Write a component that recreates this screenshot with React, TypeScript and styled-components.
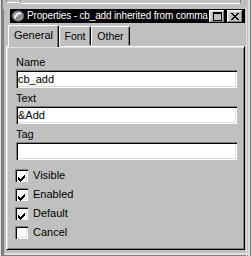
import React from 'react';
import styled, { createGlobalStyle } from 'styled-components';

const GlobalStyle = createGlobalStyle`
  html, body {
    margin: 0;
    padding: 0;
    background: #c0c0c0;
  }
  * {
    box-sizing: border-box;
  }
`;

const Screen = styled.div`
  width: 251px;
  height: 256px;
  overflow: hidden;
  background: #c0c0c0;
  font-family: 'Liberation Sans', Arial, sans-serif;
  font-size: 10.5px;
  color: #000;
  display: flex;
  flex-direction: column;
  box-shadow: inset 1px 0 #dfdfdf, inset 3px 0 #808080, inset -1px 0 #808080,
    inset -3px 0 #dfdfdf, inset 0 -1px #808080, inset 0 -3px #dfdfdf;
`;

const TopStrip = styled.div`
  height: 9px;
  display: flex;
  padding: 0 10px 0 6px;
`;

const Ledge = styled.div<{ boxed?: boolean }>`
  height: ${(p) => (p.boxed ? '3px' : '4px')};
  width: ${(p) => (p.boxed ? '15px' : 'auto')};
  flex: ${(p) => (p.boxed ? '0 0 auto' : '1')};
  border-bottom: 1px solid #fff;
  border-left: ${(p) => (p.boxed ? '1px solid #808080' : 'none')};
  border-right: 1px solid #808080;
`;

const Dialog = styled.div`
  flex: 1;
  display: flex;
  flex-direction: column;
  margin: 0 4px 0 3px;
  padding: 0 1px 0 2px;
  border-left: 1px solid #808080;
  border-right: 1px solid #dfdfdf;
`;

const TitleBar = styled.div`
  height: 14px;
  margin: 0 0 0 4px;
  background: #000;
  display: flex;
  align-items: center;
  padding: 0 2px 0 1px;
`;

const TitleText = styled.div`
  flex: 1;
  min-width: 0;
  overflow: hidden;
  white-space: nowrap;
  color: #fff;
  font-size: 10px;
  letter-spacing: -0.15px;
  line-height: 14px;
  margin-left: 2px;
`;

const CaptionButton = styled.div<{ gap?: number }>`
  width: 16px;
  height: 13px;
  flex: 0 0 auto;
  margin-left: ${(p) => p.gap ?? 0}px;
  background: #c0c0c0;
  display: flex;
  align-items: center;
  justify-content: center;
  box-shadow: inset -1px -1px #000, inset 1px 1px #fff, inset -2px -2px #808080,
    inset 2px 2px #dfdfdf;
`;

const TabRow = styled.div`
  height: 22px;
  margin-top: 1px;
  display: flex;
  align-items: flex-end;
  padding-left: 2px;
  position: relative;
  z-index: 1;
`;

const Tab = styled.div<{ active?: boolean; w: number }>`
  width: ${(p) => p.w}px;
  height: ${(p) => (p.active ? '22px' : '19px')};
  margin-bottom: ${(p) => (p.active ? '-1px' : '1px')};
  background: #c0c0c0;
  border-top: 1px solid #fff;
  border-left: 1px solid #fff;
  border-right: 1px solid #000;
  border-top-left-radius: 2px;
  border-top-right-radius: 2px;
  box-shadow: inset -1px 0 #808080;
  display: flex;
  align-items: flex-start;
  justify-content: center;
  padding-top: 3px;
  line-height: 13px;
  font-size: ${(p) => (p.active ? '11px' : '10.5px')};
`;

const Panel = styled.div`
  height: 204px;
  border-top: 1px solid #fff;
  border-left: 1px solid #fff;
  border-right: 1px solid #000;
  border-bottom: 1px solid #000;
  box-shadow: inset 1px 1px #dfdfdf, inset -1px -1px #808080;
  padding: 9px 8px 0 9px;
  display: flex;
  flex-direction: column;
`;

const FieldLabel = styled.div`
  height: 13px;
  line-height: 13px;
  font-size: 11px;
`;

const TextBox = styled.input`
  display: block;
  width: 221px;
  height: 18px;
  margin: 1px 0 4px 0;
  border: none;
  outline: none;
  padding: 0 0 0 2px;
  background: #fff;
  font-family: inherit;
  font-size: 11px;
  color: #000;
  box-shadow: inset 1px 1px #808080, inset 2px 2px #000, inset -1px -1px #fff,
    inset -2px -2px #dfdfdf;
`;

const CheckList = styled.div`
  margin-top: 2px;
  display: flex;
  flex-direction: column;
`;

const CheckRow = styled.div`
  height: 19px;
  display: flex;
  align-items: center;
  margin-left: -1px;
`;

const Box = styled.div`
  width: 13px;
  height: 13px;
  background: #fff;
  padding: 3px;
  box-shadow: inset 1px 1px #808080, inset 2px 2px #000, inset -1px -1px #fff,
    inset -2px -2px #dfdfdf;
`;

const CheckText = styled.span`
  margin-left: 5px;
  font-size: 11px;
  line-height: 13px;
`;

function AppIcon() {
  return (
    <svg width="14" height="12" viewBox="0 0 14 12">
      <ellipse cx="7" cy="6" rx="6" ry="5.2" fill="#a0a0a0" stroke="#404040" />
      <path d="M4 8 Q5 3 10 3" stroke="#fff" strokeWidth="1.6" fill="none" />
      <path d="M5 9 Q9 8 11 5" stroke="#606060" strokeWidth="1" fill="none" />
    </svg>
  );
}

function MaxGlyph() {
  return (
    <svg width="9" height="9" viewBox="0 0 9 9" shapeRendering="crispEdges">
      <rect x="0.5" y="0.5" width="8" height="8" fill="none" stroke="#000" />
      <rect x="0" y="1" width="9" height="1" fill="#000" />
    </svg>
  );
}

function CloseGlyph() {
  return (
    <svg width="8" height="7" viewBox="0 0 8 7" shapeRendering="crispEdges">
      <path
        d="M0 0h2v1h-2zM6 0h2v1h-2zM1 1h2v1h-2zM5 1h2v1h-2zM2 2h4v1h-4zM3 3h2v1h-2zM2 4h4v1h-4zM1 5h2v1h-2zM5 5h2v1h-2zM0 6h2v1h-2zM6 6h2v1h-2z"
        fill="#000"
      />
    </svg>
  );
}

function CheckGlyph() {
  return (
    <svg width="7" height="7" viewBox="0 0 7 7" shapeRendering="crispEdges">
      <path
        d="M6 0h1v1h-1zM5 1h2v1h-2zM0 2h1v1h-1zM4 2h3v1h-3zM0 3h2v1h-2zM3 3h3v1h-3zM0 4h5v1h-5zM1 5h3v1h-3zM2 6h1v1h-1z"
        fill="#000"
      />
    </svg>
  );
}

const fields = [
  { label: 'Name', value: 'cb_add' },
  { label: 'Text', value: '&Add' },
  { label: 'Tag', value: '' },
];

const options = [
  { label: 'Visible', checked: true },
  { label: 'Enabled', checked: true },
  { label: 'Default', checked: true },
  { label: 'Cancel', checked: false },
];

export default function App() {
  return (
    <Screen>
      <GlobalStyle />
      <TopStrip>
        <Ledge boxed />
        <Ledge />
      </TopStrip>
      <Dialog>
        <TitleBar>
          <AppIcon />
          <TitleText>Properties - cb_add inherited from comma</TitleText>
          <CaptionButton>
            <MaxGlyph />
          </CaptionButton>
          <CaptionButton gap={2}>
            <CloseGlyph />
          </CaptionButton>
        </TitleBar>
        <TabRow>
          <Tab active w={51}>
            General
          </Tab>
          <Tab w={32}>Font</Tab>
          <Tab w={39}>Other</Tab>
        </TabRow>
        <Panel>
          {fields.map((f) => (
            <div key={f.label}>
              <FieldLabel>{f.label}</FieldLabel>
              <TextBox readOnly defaultValue={f.value} />
            </div>
          ))}
          <CheckList>
            {options.map((o) => (
              <CheckRow key={o.label}>
                <Box>{o.checked && <CheckGlyph />}</Box>
                <CheckText>{o.label}</CheckText>
              </CheckRow>
            ))}
          </CheckList>
        </Panel>
      </Dialog>
    </Screen>
  );
}
